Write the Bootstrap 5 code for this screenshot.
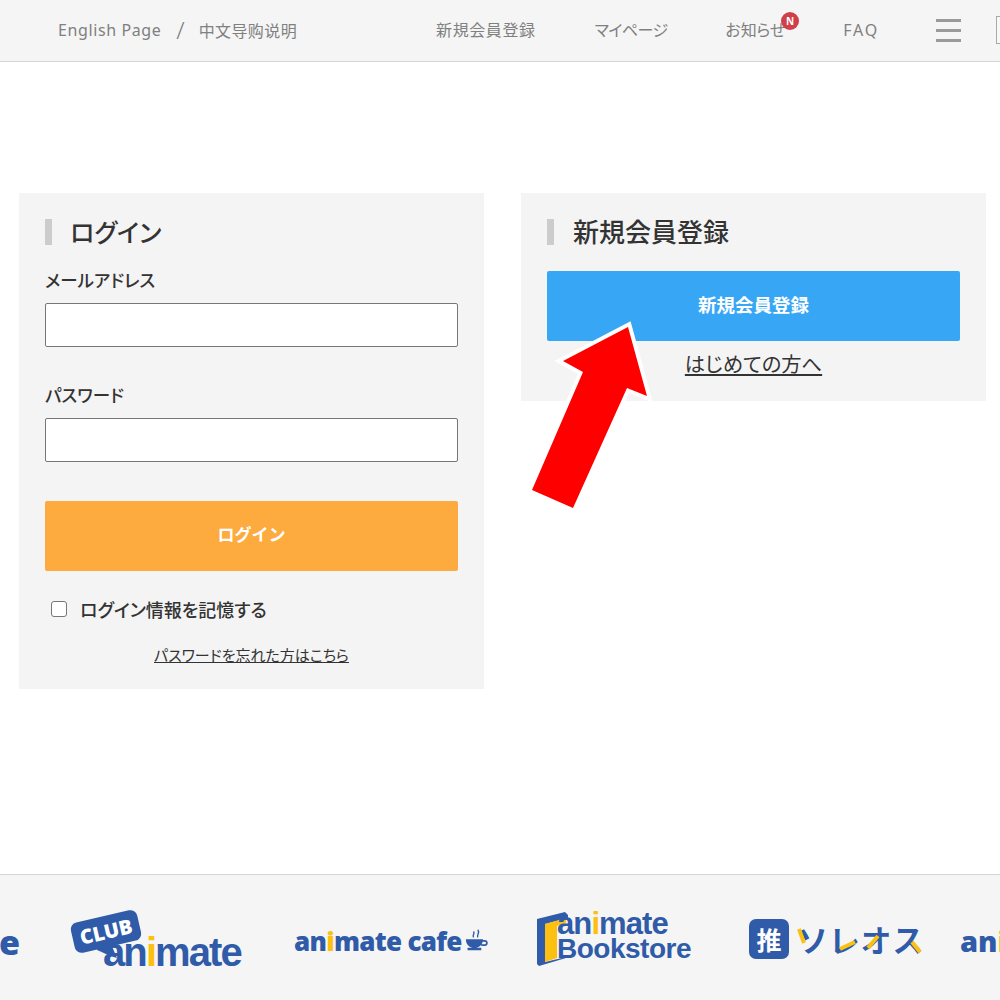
<!DOCTYPE html>
<html lang="ja">
<head>
<meta charset="utf-8">
<title>ログイン</title>
<link href="https://cdn.jsdelivr.net/npm/bootstrap@5.3.0/dist/css/bootstrap.min.css" rel="stylesheet">
<style>
body{font-family:"Noto Sans","Noto Sans CJK JP",sans-serif;font-feature-settings:"palt";color:#333;background:#fff;position:relative;overflow:hidden}
.page-wrap{height:1000px}
.top-bar{height:62px;background:#f5f5f5;border-bottom:1px solid #d6d6d6;padding:0 0 2px 58px;flex:none;overflow:hidden}
.top-bar a{color:#808080;text-decoration:none;font-size:16px;letter-spacing:.6px;white-space:nowrap;line-height:24px}
.lang-sep{color:#808080;font-size:24px;line-height:24px;margin:0 14px 0 15px;font-weight:300}
.top-bar a.zh{font-family:"Noto Sans CJK SC",sans-serif;letter-spacing:.4px}
.top-right{margin-left:139px;gap:58px}
.top-bar a.kana-a{letter-spacing:-.6px;margin-left:1px}
.top-bar a.kana-b{letter-spacing:-.15px}
.top-bar a.faq-a{letter-spacing:1.8px}
.news-wrap{position:relative}
.news-dot{position:absolute;right:-14px;top:-6px;width:18px;height:18px;border-radius:50%;background:#cf4049;color:#fff;font-size:10px;font-weight:700;line-height:18px;text-align:center;letter-spacing:0}
.burger{width:25px;gap:7px;margin-top:2px;margin-left:-1px}
.burger span{display:block;height:3px;background:#9a9a9a}
.cut-box{width:20px;height:28px;border:1px solid #aaa;background:#f8f8f8;margin-left:35px;flex:none}
.main-area{padding:131px 0 0 19px;gap:37px}
.panel-box{width:465px;background:#f4f4f4;padding:26px 26px 0}
.panel-title{border-left:7px solid #ccc;padding-left:18px;font-size:25px;font-weight:500;line-height:26px;margin:0;color:#333;height:26px}
.panel-title.title-wide{font-size:26px;padding-left:19px}
.field-label{font-size:17.5px;font-weight:500;line-height:24px;margin:0 0 11px;color:#333;display:block}
.field-input{height:44px;border:1px solid #777;border-radius:2px;background:#fff}
.act-btn{height:70px;width:100%;border:0;border-radius:2px;color:#fff;font-size:17px;font-weight:700;display:flex;align-items:center;justify-content:center;padding:0 0 2px}
.act-orange{background:#fdaa3e}
.act-blue{background:#37a7f5;font-size:18.5px}
.act-btn:hover{color:#fff}
.act-orange:hover{background:#fdaa3e}
.act-blue:hover{background:#37a7f5}
.remember{padding-left:6px;margin:0;min-height:0;display:flex;align-items:center}
.remember .form-check-input{float:none;margin:-2px 13px 0 0;width:16px;height:16px;border-color:#777;flex:none;border-radius:3px}
.remember .form-check-label{font-size:18px;font-weight:500;line-height:24px;color:#333}
.small-link{color:#333;font-size:15px;line-height:22px}
.big-link{color:#333;font-size:20.3px;line-height:28px}
.logo-strip{height:126px;background:#f5f5f5;border-top:1px solid #d6d6d6;margin-top:auto;flex:none;position:relative;overflow:hidden}
.logo-item{position:absolute;font-family:"Open Sans",sans-serif;font-weight:800;color:#2f5ba8;white-space:nowrap;font-feature-settings:normal}
.logo-item b{color:#fcc010;font-weight:800}
.logo-item svg{position:absolute;display:block;overflow:visible}
.l-first{font-size:34px;line-height:38px;right:981px;top:48px;letter-spacing:-1px}
.l-club{left:103px;top:57px;font-size:40px;line-height:41px;letter-spacing:-1.9px;font-family:"Liberation Sans",sans-serif;font-weight:700}
.l-club b{font-weight:700}
.club-tag{position:absolute;left:-31px;top:-16px;width:68px;height:31px;background:#2f5ba8;border-radius:7px;transform:rotate(-13deg);color:#fff;font-size:20px;font-family:"Open Sans",sans-serif;font-weight:800;line-height:31px;text-align:center;letter-spacing:0}
.club-tail{left:-6px;top:12px}
.l-cafe{left:294px;top:51px;font-size:26px;line-height:30px;letter-spacing:-.7px}
.l-cafe .word-gap{margin-left:6px}
.l-book{left:557px;top:37px;font-size:31px;line-height:24px;letter-spacing:-.9px;font-family:"Liberation Sans",sans-serif;font-weight:700}
.l-book b{font-weight:700}
.l-book .line2{display:block;font-size:28px;line-height:25px;letter-spacing:-.5px}
.l-oshi{left:749px;top:44px;height:40px;display:flex;align-items:center}
.oshi-icon{width:40px;height:40px;background:#2f5ba8;border-radius:7px;color:#fff;font-family:"Noto Sans CJK JP",sans-serif;font-size:25px;font-weight:700;line-height:40px;text-align:center;display:block;margin-right:8px}
.oshi-txt{font-family:"Noto Sans CJK JP",sans-serif;font-size:31px;font-weight:700;letter-spacing:.8px;line-height:40px}
.l-last{left:960px;top:49px;font-size:29px;line-height:34px}
.arrow-over{position:absolute;left:0;top:0;width:1000px;height:1000px;pointer-events:none}
</style>
</head>
<body>
<div class="page-wrap d-flex flex-column">
  <header class="top-bar d-flex align-items-center">
    <a href="#">English Page</a><span class="lang-sep">/</span><a href="#" class="zh">中文导购说明</a>
    <nav class="top-right d-flex align-items-center">
      <a href="#">新規会員登録</a>
      <a href="#" class="kana-a">マイページ</a>
      <a href="#" class="news-wrap kana-b">お知らせ<span class="news-dot">N</span></a>
      <a href="#" class="faq-a">FAQ</a>
      <div class="burger d-flex flex-column"><span></span><span></span><span></span></div>
    </nav>
    <div class="cut-box"></div>
  </header>

  <main class="main-area d-flex align-items-start">
    <section class="panel-box" style="height:496px">
      <h2 class="panel-title">ログイン</h2>
      <form>
        <label class="field-label" for="mail" style="margin-top:23px">メールアドレス</label>
        <input id="mail" class="form-control field-input" type="email">
        <label class="field-label" for="pw" style="margin-top:36px">パスワード</label>
        <input id="pw" class="form-control field-input" type="password">
        <button type="button" class="btn act-btn act-orange" style="margin-top:39px">ログイン</button>
        <div class="form-check remember" style="margin-top:27px">
          <input class="form-check-input" type="checkbox" id="keep">
          <label class="form-check-label" for="keep">ログイン情報を記憶する</label>
        </div>
        <div class="text-center" style="margin-top:21px"><a href="#" class="small-link">パスワードを忘れた方はこちら</a></div>
      </form>
    </section>
    <section class="panel-box" style="height:208px">
      <h2 class="panel-title title-wide">新規会員登録</h2>
      <a href="#" class="btn act-btn act-blue" style="margin-top:26px">新規会員登録</a>
      <div class="text-center" style="margin-top:9px"><a href="#" class="big-link">はじめての方へ</a></div>
    </section>
  </main>

  <footer class="logo-strip">
    <div class="logo-item l-first">animate</div>
    <div class="logo-item l-club"><svg class="club-tail" viewBox="0 0 20 14" width="20" height="14"><path d="M0 0h14l6 14C12 12 5 8 0 6z" fill="#2f5ba8"/></svg><span class="club-tag">CLUB</span><span class="position-relative">an<b>i</b>mate</span></div>
    <div class="logo-item l-cafe">an<b>i</b>mate<span class="word-gap">cafe</span><svg viewBox="0 0 28 28" width="24" height="24" style="left:171px;top:2px"><path d="M1 13h20c0 6-4 10-10 10S1 19 1 13zM20 14h3a3.500 3.500 0 0 1 0 7h-4v-2h4a1.500 1.500 0 0 0 0-3h-3zM3 23h16v3H3z" fill="#2f5ba8"/><path d="M10 11c-2-3 2-4 0-7M15 11c-2-3 3-5 0-9" fill="none" stroke="#2f5ba8" stroke-width="1.6"/></svg></div>
    <div class="logo-item l-book"><svg viewBox="0 0 34 54" width="34" height="54" style="left:-20px;top:0"><path d="M0 7 28 0l3 3v3L8 12v38l21-5v1L2 54l-2-2z" fill="#2f5ba8"/><path d="M8 12 29 6v5l-9 3v32L8 50z" fill="#fcc010"/></svg><span class="position-relative">an<b>i</b>mate<span class="line2">Bookstore</span></span></div>
    <div class="logo-item l-oshi"><span class="oshi-icon">推</span><span class="oshi-txt">ソレオス</span><svg viewBox="0 0 174 40" width="174" height="40" style="left:0;top:0"><path d="M50 10l5 14M91 30l15-7M119 29l10-12M163 23l8 10" fill="none" stroke="#fcc010" stroke-width="4"/></svg></div>
    <div class="logo-item l-last">an<b>i</b></div>
  </footer>
</div>

<svg class="arrow-over" viewBox="0 0 1000 1000" aria-hidden="true"><polygon points="628,327 647,396 627,388 573,508 532,490 583,372 563,361" fill="#fe0000" stroke="#fff" stroke-width="8" paint-order="stroke" stroke-linejoin="miter"/></svg>
</body>
</html>
